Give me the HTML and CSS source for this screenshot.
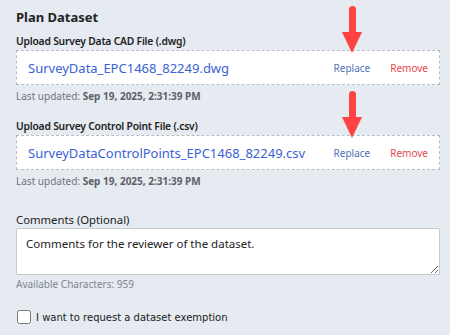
FILE: index.html
```html
<!DOCTYPE html>
<html lang="en">
<head>
    <meta charset="UTF-8">
    <meta name="viewport" content="width=device-width, initial-scale=1.0">
    <title>Plan Dataset</title>
    <link rel="stylesheet" href="styles.css">
</head>
<body>
    <div class="panel">
        <h2>Plan Dataset</h2>

        <div class="field">
            <div class="field-label">Upload Survey Data CAD File (.dwg)</div>
            <div class="file-box">
                <a class="file-name" href="#">SurveyData_EPC1468_82249.dwg</a>
                <div class="file-actions">
                    <span class="replace-wrap">
                        <a class="replace-btn" href="#">Replace</a>
                        <span class="arrow"><span class="arrow-shaft"></span><span class="arrow-head"></span></span>
                    </span>
                    <a class="remove-btn" href="#">Remove</a>
                </div>
            </div>
            <div class="updated">Last updated: <b>Sep 19, 2025, 2:31:39 PM</b></div>
        </div>

        <div class="field">
            <div class="field-label">Upload Survey Control Point File (.csv)</div>
            <div class="file-box">
                <a class="file-name" href="#">SurveyDataControlPoints_EPC1468_82249.csv</a>
                <div class="file-actions">
                    <span class="replace-wrap">
                        <a class="replace-btn" href="#">Replace</a>
                        <span class="arrow"><span class="arrow-shaft"></span><span class="arrow-head"></span></span>
                    </span>
                    <a class="remove-btn" href="#">Remove</a>
                </div>
            </div>
            <div class="updated">Last updated: <b>Sep 19, 2025, 2:31:39 PM</b></div>
        </div>

        <div class="field comments">
            <label class="comments-label" for="comments">Comments (Optional)</label>
            <textarea id="comments">Comments for the reviewer of the dataset.</textarea>
            <div class="counter">Available Characters: 959</div>
        </div>

        <label class="exemption">
            <input type="checkbox">
            <span>I want to request a dataset exemption</span>
        </label>
    </div>
</body>
</html>
```

FILE: styles.css
```css
/* general */
body {
    font-family: "Noto Sans", "Open Sans", sans-serif;
    background-color: #e6eaf1;
    color: #222;
    margin: 0;
    padding: 0;
}

.panel {
    padding: 8px 10px 0 16px;
}

h2 {
    font-size: 13px;
    font-weight: bold;
    line-height: 18px;
    margin: 0 0 7px;
}

/* file upload fields */
.field {
    margin-bottom: 15px;
}

.field-label {
    font-size: 10.3px;
    font-weight: 600;
    letter-spacing: -0.2px;
    line-height: 16px;
    margin-bottom: 1px;
}

.file-box {
    background: white;
    border: 1px dashed #b9bcc2;
    height: 33px;
    display: flex;
    align-items: center;
    justify-content: space-between;
    padding: 0 11px;
}

.file-name {
    color: #3a62d6;
    font-size: 13px;
    text-decoration: none;
}

.file-actions {
    display: flex;
    gap: 20px;
    font-size: 10px;
    line-height: 14px;
}

.file-actions a {
    text-decoration: none;
}

.replace-wrap {
    position: relative;
    display: block;
}

.replace-btn {
    color: #4f70b8;
}

.remove-btn {
    color: #e6474f;
}

.updated {
    font-size: 10px;
    color: #70747b;
    line-height: 14px;
    margin-top: 4px;
}

.updated b {
    color: #5d6168;
}

/* red pointer arrows */
.arrow {
    position: absolute;
    left: 50%;
    top: -55px;
    width: 21px;
    margin-left: -10px;
    display: flex;
    flex-direction: column;
    align-items: center;
}

.arrow-shaft {
    width: 7px;
    height: 26px;
    background: #ff4343;
    border-radius: 4px 4px 0 0;
}

.arrow-head {
    width: 0;
    height: 0;
    border-left: 10.5px solid transparent;
    border-right: 10.5px solid transparent;
    border-top: 21px solid #ff4343;
}

/* comments */
.comments {
    margin-top: 24px;
    margin-bottom: 0;
}

.comments-label {
    display: block;
    font-size: 11.3px;
    line-height: 16px;
}

textarea {
    display: block;
    box-sizing: border-box;
    width: 424px;
    height: 47px;
    border: 1px solid #c6c9ce;
    border-radius: 1px;
    padding: 7px 9px;
    font-family: "Noto Sans", "Open Sans", sans-serif;
    font-size: 11.5px;
    line-height: 16px;
    color: #222;
    margin: 0;
}

.counter {
    font-size: 10px;
    color: #80858d;
    line-height: 14px;
    margin-top: 2px;
}

.exemption {
    display: flex;
    align-items: center;
    gap: 5px;
    margin-top: 19px;
    height: 14px;
    font-family: "DejaVu Sans", sans-serif;
    font-size: 10px;
}

.exemption input {
    width: 14px;
    height: 14px;
    margin: 0 0 0 1px;
}
```
